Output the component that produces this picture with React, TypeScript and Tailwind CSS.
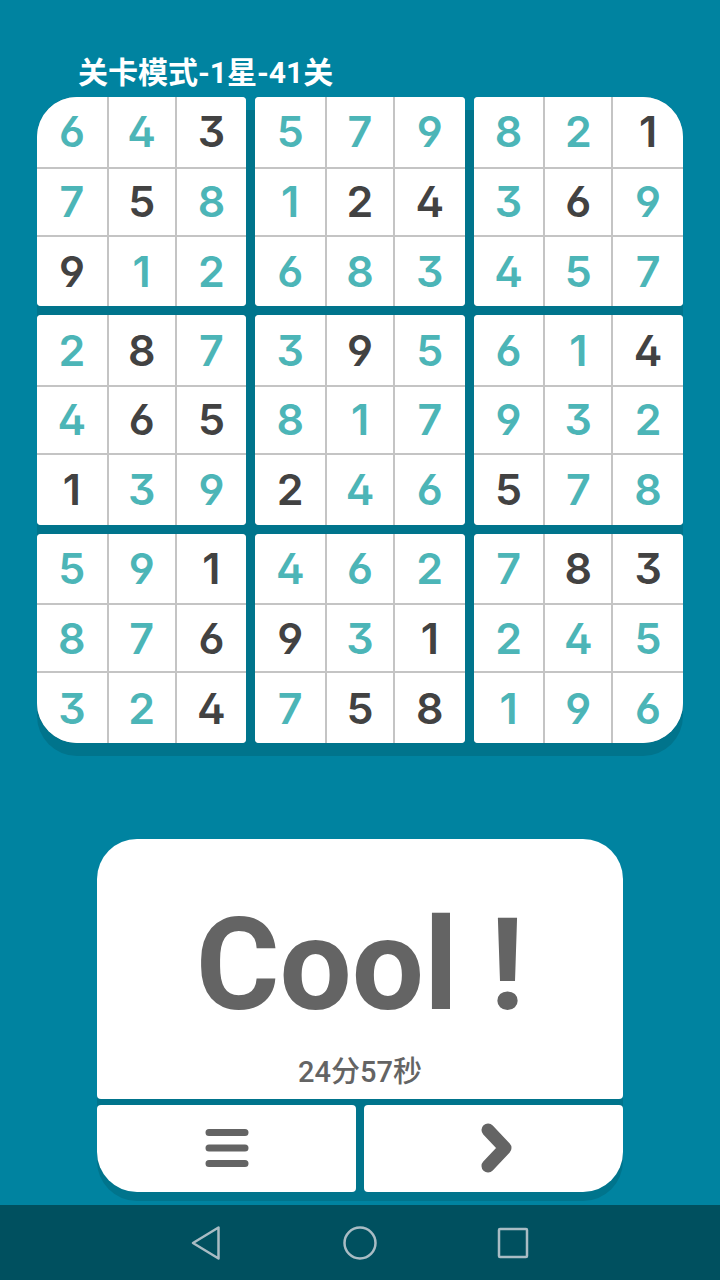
import React from 'react';

interface BoxProps {
  cells: string;
  corner: string;
}

// Each entry is one 3x3 box, read row by row. A "*" marks a given digit.
const boxes: BoxProps[] = [
  { cells: '6 4 3* 7 5* 8 9* 1 2', corner: 'rounded-tl-[40px]' },
  { cells: '5 7 9 1 2* 4* 6 8 3', corner: '' },
  { cells: '8 2 1* 3 6* 9 4 5 7', corner: 'rounded-tr-[40px]' },
  { cells: '2 8* 7 4 6* 5* 1* 3 9', corner: '' },
  { cells: '3 9* 5 8 1 7 2* 4 6', corner: '' },
  { cells: '6 1 4* 9 3 2 5* 7 8', corner: '' },
  { cells: '5 9 1* 8 7 6* 3 2 4*', corner: 'rounded-bl-[40px]' },
  { cells: '4 6 2 9* 3 1* 7 5* 8*', corner: '' },
  { cells: '7 8* 3* 2 4 5 1 9 6', corner: 'rounded-br-[40px]' },
];

const Box: React.FC<BoxProps> = ({ cells, corner }) => (
  <div
    className={`grid aspect-square grid-cols-[70fr_66fr_70fr] grid-rows-[70fr_66fr_70fr] gap-[2px] overflow-hidden rounded-[4px] bg-[#c4c4c4] ${corner}`}
  >
    {cells.split(' ').map((cell, i) => (
      <div
        key={i}
        className={`flex items-center justify-center bg-white ${
          cell.endsWith('*') ? 'text-[#424242]' : 'text-[#4cb5b7]'
        }`}
      >
        {cell[0]}
      </div>
    ))}
  </div>
);

const App: React.FC = () => {
  return (
    <div className="flex min-h-screen flex-col bg-[#0083a0] font-['Roboto','Noto_Sans_CJK_SC',sans-serif]">
      <main className="flex-1 px-[37px] pt-[50px] pb-[13px]">
        <h1 className="pb-[2px] pl-[41px] text-[30px] leading-[45px] font-bold text-white">
          关卡模式-1星-41关
        </h1>

        {/* Board */}
        <div className="relative">
          <div className="absolute inset-0 translate-y-[13px] rounded-[40px] bg-[#00748c]" />
          <div className="relative grid grid-cols-3 gap-[9px] font-['Inter',sans-serif] text-[43px] leading-none font-semibold [font-feature-settings:'ss01','cv09']">
            {boxes.map((box) => (
              <Box key={box.cells} {...box} />
            ))}
          </div>
        </div>

        {/* Result */}
        <section className="relative mx-[60px] mt-24 text-[#646464]">
          <div className="absolute inset-0 translate-y-[9px] rounded-[40px] bg-[#00748c]" />
          <div className="relative grid grid-cols-2 gap-x-2 gap-y-[6px]">
            <div className="col-span-2 flex h-[260px] flex-col items-center rounded-[4px] rounded-t-[40px] bg-white pt-[62px]">
              <p className="text-[128px] leading-[128px] font-bold whitespace-pre">Cool !</p>
              <p className="mt-6 text-[29px] leading-[38px] font-medium">24分57秒</p>
            </div>
            <button
              aria-label="菜单"
              className="flex h-[87px] items-center justify-center rounded-[4px] rounded-bl-[40px] bg-white"
            >
              <svg width="44" height="40" viewBox="0 0 44 40" stroke="currentColor" strokeWidth="7" strokeLinecap="round">
                <path d="M4 4.5h36M4 20h36M4 35.5h36" />
              </svg>
            </button>
            <button
              aria-label="下一关"
              className="flex h-[87px] items-center justify-center rounded-[4px] rounded-br-[40px] bg-white pl-1"
            >
              <svg width="32" height="50" viewBox="0 0 32 50" fill="none" stroke="currentColor" strokeWidth="13" strokeLinecap="round" strokeLinejoin="round">
                <path d="M8 7l17 18-17 18" />
              </svg>
            </button>
          </div>
        </section>
      </main>

      {/* System navigation */}
      <nav className="flex h-[75px] items-center justify-center bg-[#00505f] text-[#a9bcc4]">
        <button aria-label="返回" className="flex w-[153px] justify-center">
          <svg width="36" height="36" viewBox="0 0 36 36" fill="none" stroke="currentColor" strokeWidth="2.5" strokeLinejoin="round">
            <path d="M4 18L29.5 2.5v31z" />
          </svg>
        </button>
        <button aria-label="主页" className="flex w-[153px] justify-center">
          <svg width="36" height="36" viewBox="0 0 36 36" fill="none" stroke="currentColor" strokeWidth="2.5">
            <circle cx="18" cy="18" r="15.5" />
          </svg>
        </button>
        <button aria-label="最近任务" className="flex w-[153px] justify-center">
          <svg width="36" height="36" viewBox="0 0 36 36" fill="none" stroke="currentColor" strokeWidth="2.5">
            <rect x="4" y="4" width="28" height="28" rx="1" />
          </svg>
        </button>
      </nav>
    </div>
  );
};

export default App;
